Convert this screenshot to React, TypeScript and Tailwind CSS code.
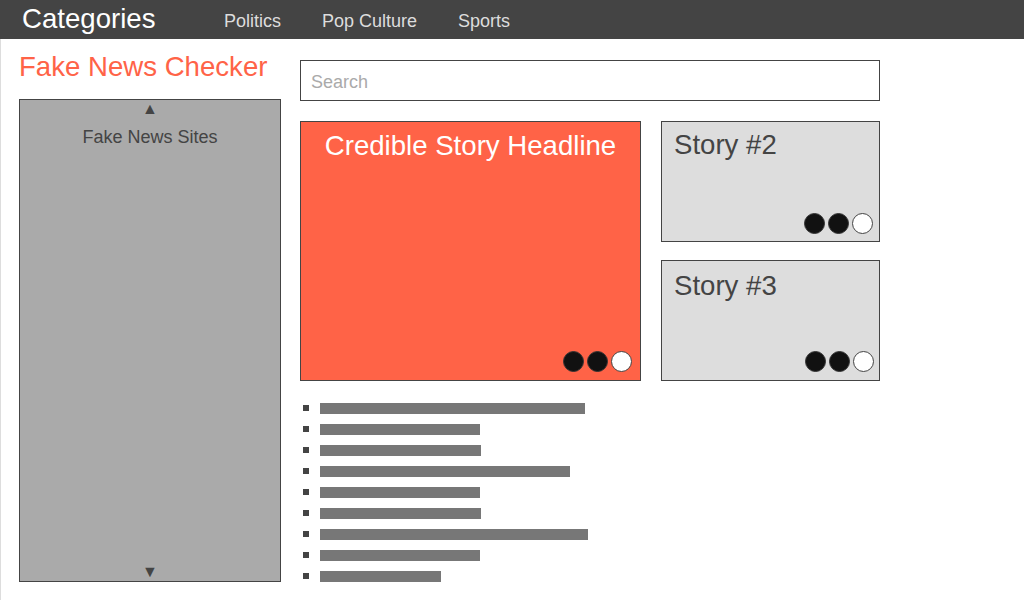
import React from "react";

const Dots = () => (
  <div className="flex gap-[3px]">
    <span className="block w-[21px] h-[21px] rounded-full bg-[#111] border border-[#333]" />
    <span className="block w-[21px] h-[21px] rounded-full bg-[#111] border border-[#333]" />
    <span className="block w-[21px] h-[21px] rounded-full bg-white border border-[#444]" />
  </div>
);

const bars = [265, 160, 161, 250, 160, 161, 268, 160, 121];

export default function App() {
  return (
    <div
      className="w-[1024px] h-[600px] bg-white overflow-hidden flex flex-col"
      style={{ fontFamily: '"Liberation Sans", Arial, sans-serif' }}
    >
      <header className="h-[39px] bg-[#444] flex items-center shrink-0">
        <div className="w-[224px] pl-[22px] text-[27.6px] leading-[32px] text-white -mt-[1px]">
          Categories
        </div>
        <nav className="flex gap-[41px] text-[18px] leading-[20px] text-[#ddd] mt-[2px]">
          <span>Politics</span>
          <span>Pop Culture</span>
          <span>Sports</span>
        </nav>
      </header>

      <div className="flex-1 flex border-l border-[#ddd]">
        <aside className="ml-[18px] w-[262px] flex flex-col">
          <h1 className="mt-[12px] text-[27.6px] leading-[32px] text-[#ff6347] whitespace-nowrap">
            Fake News Checker
          </h1>
          <div className="mt-[16px] h-[483px] bg-[#aaa] border border-[#444] flex flex-col items-center text-[#444]">
            <div className="text-[16px] leading-[16px] mt-[1px]">▲</div>
            <div className="text-[18px] leading-[21px] mt-[10px]">Fake News Sites</div>
            <div className="flex-1" />
            <div className="text-[16px] leading-[16px] mb-[1px]">▼</div>
          </div>
        </aside>

        <main className="ml-[19px] w-[580px] flex flex-col">
          <div className="mt-[21px] h-[41px] border border-[#444] flex items-center pl-[10px] pt-[3px] text-[18px] text-[#aaa]">
            Search
          </div>

          <div className="mt-[20px] flex gap-[20px]">
            <div className="w-[341px] h-[260px] bg-[#ff6347] border border-[#444] flex flex-col items-center pt-[8px] pb-[8px] pr-[8px]">
              <div className="text-[27.6px] leading-[32px] text-white pl-[8px]">
                Credible Story Headline
              </div>
              <div className="flex-1" />
              <div className="self-end">
                <Dots />
              </div>
            </div>

            <div className="w-[219px] flex flex-col gap-[18px]">
              <div className="h-[121px] bg-[#ddd] border border-[#444] flex flex-col pt-[7px] pl-[12px] pr-[6px] pb-[7px]">
                <div className="text-[27.6px] leading-[32px] text-[#444]">Story #2</div>
                <div className="flex-1" />
                <div className="self-end">
                  <Dots />
                </div>
              </div>
              <div className="h-[121px] bg-[#ddd] border border-[#444] flex flex-col pt-[9px] pl-[12px] pr-[5px] pb-[8px]">
                <div className="text-[27.6px] leading-[32px] text-[#444]">Story #3</div>
                <div className="flex-1" />
                <div className="self-end">
                  <Dots />
                </div>
              </div>
            </div>
          </div>

          <ul className="mt-[22px] flex flex-col gap-[10px]">
            {bars.map((w, i) => (
              <li key={i} className="flex items-start h-[11px]">
                <span className="block w-[6px] h-[6px] bg-[#444] ml-[3px] mt-[2px]" />
                <span className="block h-[11px] bg-[#777] ml-[11px]" style={{ width: w }} />
              </li>
            ))}
          </ul>
        </main>
      </div>
    </div>
  );
}
